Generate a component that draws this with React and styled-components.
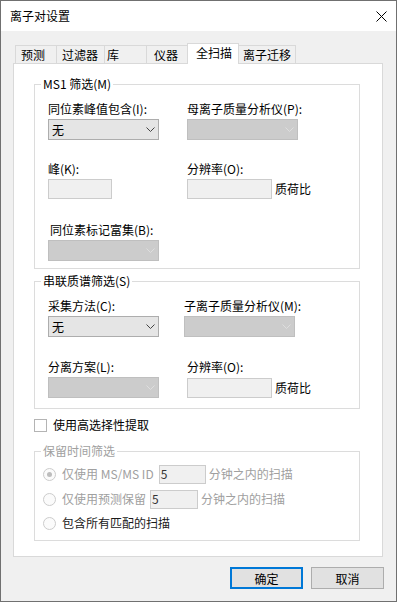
import styled, { createGlobalStyle } from "styled-components"

const GlobalStyle = createGlobalStyle`
  html, body {
    margin: 0;
    padding: 0;
    background: #f0f0f0;
  }
`

const Window = styled.div`
  width: 397px;
  height: 602px;
  box-sizing: border-box;
  border: 1px solid #707070;
  background: #f0f0f0;
  display: flex;
  flex-direction: column;
  font-family: "Noto Sans CJK SC", "Microsoft YaHei", sans-serif;
  font-size: 12px;
  line-height: 16px;
  color: #000;
`

const TitleBar = styled.div`
  height: 30px;
  flex: none;
  background: #fff;
  display: flex;
  align-items: center;
  justify-content: space-between;
  padding: 0 9px 0 9px;
`

const CloseIcon = styled.svg`
  width: 11px;
  height: 11px;
  display: block;
`

const Body = styled.div`
  flex: 1;
  display: flex;
  flex-direction: column;
  padding: 12px 12px 12px 12px;
`

const TabStrip = styled.div`
  height: 20px;
  display: flex;
  align-items: flex-end;
  padding-left: 2px;
`

const Tab = styled.div`
  position: relative;
  box-sizing: border-box;
  width: ${p => p.$w}px;
  height: ${p => (p.$active ? 21 : 18)}px;
  margin-right: -1px;
  margin-bottom: ${p => (p.$active ? -1 : 0)}px;
  padding-left: ${p => p.$pl}px;
  padding-bottom: ${p => (p.$active ? 2 : 0)}px;
  border: 1px solid #d9d9d9;
  border-bottom: none;
  background: ${p => (p.$active ? "#fff" : "#f0f0f0")};
  z-index: ${p => (p.$active ? 2 : 1)};
  display: flex;
  align-items: center;
  white-space: nowrap;
`

const Panel = styled.div`
  box-sizing: border-box;
  height: 494px;
  margin-right: 1px;
  border: 1px solid #d9d9d9;
  background: #fff;
  padding: 12px 22px 0 20px;
`

const Group = styled.fieldset`
  margin: ${p => p.$mt || 0}px 0 0 0;
  padding: 0;
  min-width: 0;
  border: 1px solid #dcdcdc;
`

const Legend = styled.legend`
  margin-left: 6px;
  padding: 0 2px;
  font-size: 12px;
  line-height: 16px;
  color: ${p => (p.$disabled ? "#a0a0a0" : "#000")};
`

const GroupBody = styled.div`
  padding: ${p => p.$pad};
`

const Row = styled.div`
  display: grid;
  grid-template-columns: ${p => p.$col}px auto;
  margin-top: ${p => p.$mt || 0}px;
`

const Field = styled.div`
  display: flex;
  flex-direction: column;
  align-items: flex-start;
`

const Label = styled.div`
  height: 16px;
  margin-left: ${p => p.$indent || 0}px;
  margin-bottom: ${p => (p.$gap === undefined ? 2 : p.$gap)}px;
  white-space: nowrap;
`

const Combo = styled.div`
  box-sizing: border-box;
  width: 111px;
  height: 21px;
  border: 1px solid ${p => (p.$disabled ? "#bfbfbf" : "#adadad")};
  background: ${p => (p.$disabled ? "#cccccc" : "#e5e5e5")};
  display: flex;
  align-items: center;
  justify-content: space-between;
  padding: 0 3px 0 3px;
`

const Chevron = styled.svg`
  width: 9px;
  height: 5px;
  display: block;
  margin-top: -1px;
`

const InputRow = styled.div`
  display: flex;
  align-items: center;
`

const TextBox = styled.div`
  box-sizing: border-box;
  width: ${p => p.$w}px;
  height: ${p => p.$h || 20}px;
  margin-top: ${p => p.$mt || 0}px;
  border: 1px solid #cccccc;
  background: #f0f0f0;
  padding-left: 1px;
  display: flex;
  align-items: center;
  color: #333;
  flex: none;
`

const Unit = styled.span`
  margin-left: 3px;
  white-space: nowrap;
  color: ${p => (p.$disabled ? "#a0a0a0" : "#000")};
`

const CheckRow = styled.label`
  display: flex;
  align-items: center;
  height: 16px;
  margin-top: 8px;
`

const CheckBox = styled.span`
  box-sizing: border-box;
  width: 13px;
  height: 13px;
  border: 1px solid #b4b4b4;
  background: #fff;
  margin-right: 6px;
  flex: none;
`

const RadioRow = styled.div`
  display: flex;
  align-items: center;
  height: 20px;
  margin-top: ${p => p.$mt || 0}px;
  color: ${p => (p.$disabled ? "#a0a0a0" : "#1a1a1a")};
  white-space: nowrap;
`

const Radio = styled.span`
  box-sizing: border-box;
  width: 13px;
  height: 13px;
  border-radius: 50%;
  border: 1px solid #cccccc;
  background: #fbfbfb;
  margin-right: 6px;
  flex: none;
  display: flex;
  align-items: center;
  justify-content: center;

  &::after {
    content: "";
    width: 5px;
    height: 5px;
    border-radius: 50%;
    background: ${p => (p.$checked ? "#bdbdbd" : "transparent")};
  }
`

const Gap = styled.span`
  display: inline-block;
  width: ${p => p.$w}px;
`

const ButtonRow = styled.div`
  display: flex;
  justify-content: flex-end;
  gap: 8px;
  margin-top: 10px;
`

const Button = styled.button`
  box-sizing: border-box;
  width: 73px;
  height: 22px;
  padding: 0;
  margin: 0;
  font-family: inherit;
  font-size: 12px;
  color: #000;
  background: #e1e1e1;
  border: ${p => (p.$primary ? "2px solid #0078d7" : "1px solid #adadad")};
`

const tabs = [
  { label: "预测", w: 42, pl: 5 },
  { label: "过滤器", w: 49, pl: 5 },
  { label: "库", w: 43, pl: 2 },
  { label: "仪器", w: 42, pl: 7 },
  { label: "全扫描", w: 52, pl: 8, active: true },
  { label: "离子迁移", w: 58, pl: 4 },
]

const Arrow = ({ disabled }) => (
  <Chevron viewBox="0 0 9 5">
    <polyline points="0.5,0.5 4.5,4.5 8.5,0.5" fill="none" stroke={disabled ? "#dedede" : "#444"} strokeWidth="1" />
  </Chevron>
)

const Select = ({ value, disabled }) => (
  <Combo $disabled={disabled}>
    <span>{value}</span>
    <Arrow disabled={disabled} />
  </Combo>
)

const App = () => {
  return (
    <>
      <GlobalStyle />
      <Window>
        <TitleBar>
          <span>离子对设置</span>
          <CloseIcon viewBox="0 0 11 11">
            <path d="M0.5 0.5 L10.5 10.5 M10.5 0.5 L0.5 10.5" stroke="#000" strokeWidth="1" fill="none" />
          </CloseIcon>
        </TitleBar>
        <Body>
          <TabStrip>
            {tabs.map(t => (
              <Tab key={t.label} $w={t.w} $pl={t.pl} $active={t.active}>{t.label}</Tab>
            ))}
          </TabStrip>
          <Panel>
            <Group>
              <Legend>MS1 筛选(M)</Legend>
              <GroupBody $pad="9px 0 7px 13px">
                <Row $col={139}>
                  <Field>
                    <Label>同位素峰值包含(I):</Label>
                    <Select value="无" />
                  </Field>
                  <Field>
                    <Label>母离子质量分析仪(P):</Label>
                    <Select disabled />
                  </Field>
                </Row>
                <Row $col={139} $mt={21}>
                  <Field>
                    <Label>峰(K):</Label>
                    <TextBox $w={64} />
                  </Field>
                  <Field>
                    <Label>分辨率(O):</Label>
                    <InputRow>
                      <TextBox $w={85} />
                      <Unit>质荷比</Unit>
                    </InputRow>
                  </Field>
                </Row>
                <Row $col={139} $mt={23}>
                  <Field>
                    <Label $indent={2}>同位素标记富集(B):</Label>
                    <Select disabled />
                  </Field>
                </Row>
              </GroupBody>
            </Group>

            <Group $mt={4}>
              <Legend>串联质谱筛选(S)</Legend>
              <GroupBody $pad="9px 0 10px 13px">
                <Row $col={136}>
                  <Field>
                    <Label>采集方法(C):</Label>
                    <Select value="无" />
                  </Field>
                  <Field>
                    <Label>子离子质量分析仪(M):</Label>
                    <Select disabled />
                  </Field>
                </Row>
                <Row $col={139} $mt={22}>
                  <Field>
                    <Label>分离方案(L):</Label>
                    <Select disabled />
                  </Field>
                  <Field>
                    <Label>分辨率(O):</Label>
                    <InputRow>
                      <TextBox $w={85} $mt={1} />
                      <Unit>质荷比</Unit>
                    </InputRow>
                  </Field>
                </Row>
              </GroupBody>
            </Group>

            <CheckRow>
              <CheckBox />
              <span>使用高选择性提取</span>
            </CheckRow>

            <Group $mt={10}>
              <Legend $disabled>保留时间筛选</Legend>
              <GroupBody $pad="5px 0 7px 8px">
                <RadioRow $disabled>
                  <Radio $checked />
                  <span>仅使用 MS/MS ID</span>
                  <Gap $w={5} />
                  <TextBox $w={47} $h={19}>5</TextBox>
                  <Unit $disabled>分钟之内的扫描</Unit>
                </RadioRow>
                <RadioRow $disabled $mt={5}>
                  <Radio />
                  <span>仅使用预测保留</span>
                  <Gap $w={4} />
                  <TextBox $w={48} $h={19}>5</TextBox>
                  <Unit $disabled>分钟之内的扫描</Unit>
                </RadioRow>
                <RadioRow $mt={4}>
                  <Radio />
                  <span>包含所有匹配的扫描</span>
                </RadioRow>
              </GroupBody>
            </Group>
          </Panel>
          <ButtonRow>
            <Button $primary>确定</Button>
            <Button>取消</Button>
          </ButtonRow>
        </Body>
      </Window>
    </>
  )
}

export default App
